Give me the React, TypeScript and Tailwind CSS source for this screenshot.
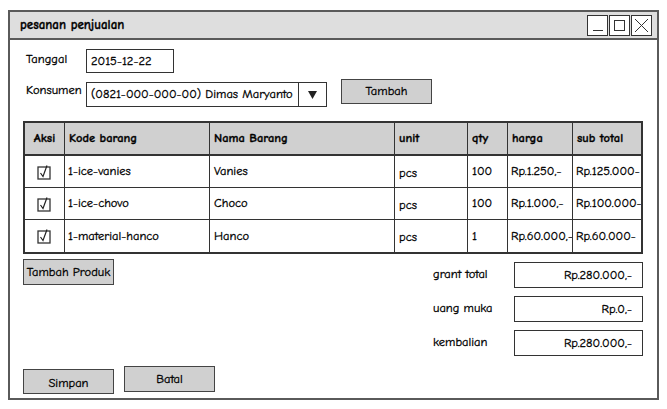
import React from 'react';

const rows = [
  { kode: '1-ice-vanies', nama: 'Vanies', unit: 'pcs', qty: '100', harga: 'Rp.1.250,-', sub: 'Rp.125.000-' },
  { kode: '1-ice-chovo', nama: 'Choco', unit: 'pcs', qty: '100', harga: 'Rp.1.000,-', sub: 'Rp.100.000-' },
  { kode: '1-material-hanco', nama: 'Hanco', unit: 'pcs', qty: '1', harga: 'Rp.60.000,-', sub: 'Rp.60.000-' },
];

const totals = [
  { label: 'grant total', value: 'Rp.280.000,-' },
  { label: 'uang muka', value: 'Rp.0,-' },
  { label: 'kembalian', value: 'Rp.280.000,-' },
];

function Check() {
  return (
    <svg width="15" height="16" viewBox="0 0 15 16">
      <rect x="1" y="3" width="12" height="12" fill="white" stroke="#333" strokeWidth="1.3" />
      <path d="M3.5 9 L6 12.5 L10 1.5" fill="none" stroke="#222" strokeWidth="1.2" />
    </svg>
  );
}

export default function App() {
  const cols = 'grid grid-cols-[39px_145px_185px_73px_40px_65px_1fr]';
  return (
    <div className="w-[667px] h-[409px] bg-white pt-[10px] pl-[8px] text-[12.5px] text-black [-webkit-text-stroke:0.3px_black]" style={{ fontFamily: '"Comic Sans MS", "Comic Neue", "DejaVu Sans Condensed", "Liberation Sans", sans-serif' }}>
      <div className="w-[651px] h-[390px] border-2 border-[#5a5a5a] flex flex-col">
        {/* title bar */}
        <div className="h-[28px] bg-[#dedede] border-b-2 border-[#5a5a5a] flex items-center pl-[10px] pr-[5px]">
          <span className="flex-1 text-[13px] font-bold">pesanan penjualan</span>
          <div className="flex gap-[1px]">
            <div className="w-[21px] h-[21px] border border-[#333] bg-white flex items-end justify-center pb-[4px]">
              <div className="w-[10px] h-[1px] bg-[#333]" />
            </div>
            <div className="w-[21px] h-[21px] border border-[#333] bg-white flex items-center justify-center">
              <div className="w-[11px] h-[11px] border border-[#333]" />
            </div>
            <div className="w-[21px] h-[21px] border border-[#333] bg-white flex items-center justify-center">
              <svg width="15" height="15" viewBox="0 0 15 15">
                <path d="M1 1 L14 14 M14 1 L1 14" stroke="#333" strokeWidth="1" />
              </svg>
            </div>
          </div>
        </div>

        <div className="flex-1 flex flex-col pl-[13px] pr-[13px]">
          {/* Tanggal */}
          <div className="flex items-start mt-[9px]">
            <span className="w-[63px] pl-[3px] mt-[1px]">Tanggal</span>
            <div className="w-[88px] h-[24px] border border-[#333] flex items-center px-[4px]">2015-12-22</div>
          </div>
          {/* Konsumen */}
          <div className="flex items-start mt-[9px]">
            <span className="w-[63px] pl-[3px] mt-[-1px]">Konsumen</span>
            <div className="w-[241px] h-[25px] border border-[#333] flex">
              <div className="flex-1 flex items-center px-[4px] whitespace-nowrap">(0821-000-000-00) Dimas Maryanto</div>
              <div className="w-[28px] border-l border-[#333] flex items-center justify-center">
                <svg width="9" height="8" viewBox="0 0 9 8"><path d="M0 0 L9 0 L4.5 8 Z" fill="#222" /></svg>
              </div>
            </div>
            <button className="ml-[14px] mt-[-3px] w-[91px] h-[25px] bg-[#d0d0d0] border border-[#444] flex items-center justify-center">Tambah</button>
          </div>

          {/* table */}
          <div className="mt-[14px] w-[620px] border-2 border-[#333]">
            <div className={`${cols} h-[33px] bg-[#d0d0d0] border-b-2 border-[#333] font-bold`}>
              {['Aksi', 'Kode barang', 'Nama Barang', 'unit', 'qty', 'harga', 'sub total'].map((h, i) => (
                <div key={h} className={`flex items-center ${i === 0 ? 'justify-center' : 'pl-[4px] border-l border-[#333]'}`}>{h}</div>
              ))}
            </div>
            {rows.map((r, i) => (
              <div key={r.kode} className={`${cols} h-[32px] ${i < rows.length - 1 ? 'border-b border-[#333]' : ''}`}>
                <div className="flex items-center justify-center"><Check /></div>
                <div className="flex items-center pl-[3px] border-l border-[#333]">{r.kode}</div>
                <div className="flex items-center pl-[4px] border-l border-[#333]">{r.nama}</div>
                <div className="flex items-center pl-[4px] border-l border-[#333] pt-[3px]">{r.unit}</div>
                <div className="flex items-center pl-[4px] border-l border-[#333]">{r.qty}</div>
                <div className="flex items-center pl-[3px] border-l border-[#333] overflow-hidden whitespace-nowrap">{r.harga}</div>
                <div className="flex items-center pl-[3px] border-l border-[#333] overflow-hidden whitespace-nowrap">{r.sub}</div>
              </div>
            ))}
          </div>

          {/* bottom area */}
          <div className="flex mt-[5px]">
            <div className="flex-1">
              <button className="w-[91px] h-[26px] bg-[#d0d0d0] border border-[#444] flex items-center justify-center">Tambah Produk</button>
            </div>
            <div className="flex flex-col gap-[8px] mt-[3px] mr-[1px]">
              {totals.map((t) => (
                <div key={t.label} className="flex items-start">
                  <span className="w-[81px] mt-[3px]">{t.label}</span>
                  <div className="w-[129px] h-[26px] border border-[#333] flex items-center justify-end pr-[10px]">{t.value}</div>
                </div>
              ))}
            </div>
          </div>

          <div className="flex gap-[10px] mt-[10px] items-end">
            <button className="w-[91px] h-[25px] bg-[#d0d0d0] border border-[#444] flex items-center justify-center pt-[4px]">Simpan</button>
            <button className="w-[91px] h-[26px] bg-[#d0d0d0] border border-[#444] flex items-center justify-center mb-[2px]">Batal</button>
          </div>
        </div>
      </div>
    </div>
  );
}
